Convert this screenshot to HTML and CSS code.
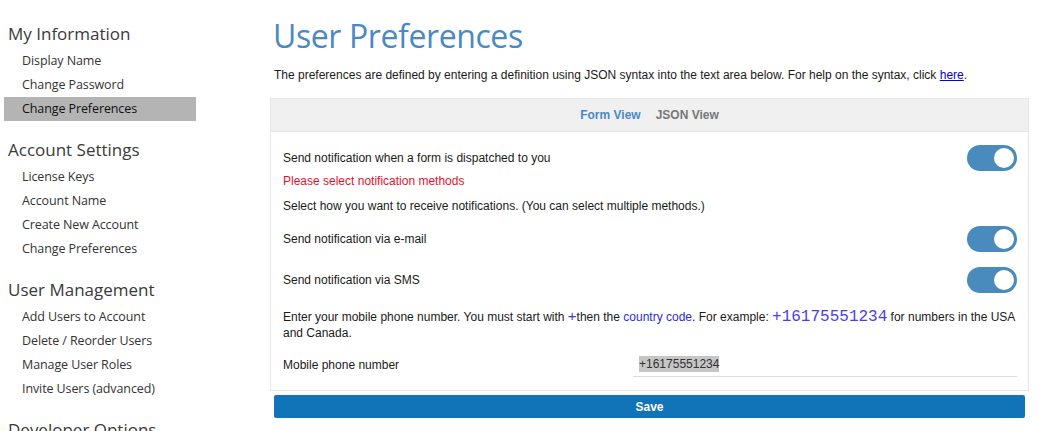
FILE: index.html
```html
<!DOCTYPE html>
<html>
<head>
<meta charset="utf-8">
<link rel="stylesheet" href="styles.css">
</head>
<body>
<div class="page">
  <nav class="sidebar">
    <div class="section">
      <h2 class="sec-title">My Information</h2>
      <a class="item">Display Name</a>
      <a class="item">Change Password</a>
      <a class="item active">Change Preferences</a>
    </div>
    <div class="section">
      <h2 class="sec-title">Account Settings</h2>
      <a class="item">License Keys</a>
      <a class="item">Account Name</a>
      <a class="item">Create New Account</a>
      <a class="item">Change Preferences</a>
    </div>
    <div class="section">
      <h2 class="sec-title">User Management</h2>
      <a class="item">Add Users to Account</a>
      <a class="item">Delete / Reorder Users</a>
      <a class="item">Manage User Roles</a>
      <a class="item">Invite Users (advanced)</a>
    </div>
    <div class="section">
      <h2 class="sec-title">Developer Options</h2>
    </div>
  </nav>
  <main class="main">
    <h1 class="title">User Preferences</h1>
    <p class="intro">The preferences are defined by entering a definition using JSON syntax into the text area below. For help on the syntax, click <a class="link" href="#">here</a>.</p>
    <div class="panel">
      <div class="tabs">
        <span class="tab tab-on">Form View</span>
        <span class="tab tab-off">JSON View</span>
      </div>
      <div class="body">
        <div class="row r1">
          <span>Send notification when a form is dispatched to you</span>
          <span class="toggle"><span class="knob"></span></span>
        </div>
        <div class="line error">Please select notification methods</div>
        <div class="line select">Select how you want to receive notifications. (You can select multiple methods.)</div>
        <div class="row r-email">
          <span>Send notification via e-mail</span>
          <span class="toggle"><span class="knob"></span></span>
        </div>
        <div class="row r-sms">
          <span>Send notification via SMS</span>
          <span class="toggle"><span class="knob"></span></span>
        </div>
        <p class="hint">Enter your mobile phone number. You must start with <span class="plus">+</span>then the <a class="clink">country code</a>. For example: <span class="example">+16175551234</span> for numbers in the USA and Canada.</p>
        <div class="phone-row">
          <span class="phone-label">Mobile phone number</span>
          <span class="phone-input"><span class="sel">+16175551234</span></span>
        </div>
      </div>
    </div>
    <button class="save">Save</button>
  </main>
</div>
</body>
</html>
```
FILE: styles.css
```css
html, body {
  margin: 0;
  padding: 0;
  background: #fff;
}
.page {
  display: flex;
  align-items: flex-start;
}
.sidebar {
  width: 196px;
  padding: 22px 0 0 4px;
  box-sizing: border-box;
  flex: none;
  font-family: "Open Sans", "Noto Sans", sans-serif;
}
.section {
  display: flex;
  flex-direction: column;
  margin-bottom: 17px;
}
.sec-title {
  margin: 0 0 3px 0;
  padding-left: 4px;
  font-size: 17px;
  font-weight: 400;
  line-height: 24px;
  color: #3a3a3a;
  white-space: nowrap;
}
.item {
  display: block;
  height: 24px;
  line-height: 24px;
  padding-left: 18px;
  font-size: 12.5px;
  color: #333;
  letter-spacing: -0.1px;
  white-space: nowrap;
}
.item.active {
  background: #b4b4b4;
  color: #111;
}
.main {
  flex: 1;
  padding: 0 14px 0 74px;
  font-family: "Liberation Sans", Arial, sans-serif;
  font-size: 12px;
  color: #1a1a1a;
}
.title {
  margin: 15px 0 0 3px;
  font-family: "Open Sans", "Noto Sans", sans-serif;
  font-weight: 400;
  font-size: 32px;
  line-height: 42px;
  color: #4a89c3;
  letter-spacing: -0.4px;
}
.intro {
  margin: 10px 0 0 4px;
  line-height: 16px;
}
.link {
  color: #0000ee;
  text-decoration: underline;
}
.panel {
  margin-top: 15px;
  border: 1px solid #e6e6e6;
  background: #fff;
}
.tabs {
  height: 32px;
  background: #f0f0f0;
  border-bottom: 1px solid #e6e6e6;
  display: flex;
  justify-content: center;
  align-items: center;
  gap: 15px;
  font-weight: bold;
}
.tab-on { color: #4a89c3; }
.tab-off { color: #777; }
.body {
  padding: 13px 11px 13px 12px;
}
.row {
  display: flex;
  justify-content: space-between;
  align-items: center;
  height: 26px;
}
.toggle {
  width: 50px;
  height: 26px;
  border-radius: 13px;
  background: #4a8bbd;
  display: flex;
  justify-content: flex-end;
  align-items: center;
  padding-right: 3px;
  box-sizing: border-box;
}
.knob {
  width: 20px;
  height: 20px;
  border-radius: 50%;
  background: #fff;
}
.line {
  line-height: 16px;
}
.error {
  margin-top: 2px;
  color: #e8102e;
}
.select {
  margin-top: 9px;
}
.r-email { margin-top: 12px; }
.r-sms { margin-top: 15px; }
.hint {
  margin: 16px 0 0 0;
  line-height: 16px;
}
.plus {
  color: #3a3ae8;
  font-size: 15px;
  line-height: 12px;
}
.clink {
  color: #2a2ae0;
}
.example {
  font-family: "Liberation Mono", "Courier New", monospace;
  font-size: 16px;
  line-height: 12px;
  color: #4b3cf0;
}
.phone-row {
  margin-top: 12px;
  display: flex;
  align-items: stretch;
  height: 24px;
}
.phone-label {
  width: 350px;
  flex: none;
  display: flex;
  align-items: center;
}
.phone-input {
  flex: 1;
  border-bottom: 1px solid #dcdcdc;
  padding-left: 6px;
  display: flex;
  align-items: center;
  padding-bottom: 1px;
}
.sel {
  background: #c6c6c6;
  color: #333;
  line-height: 16px;
}
.save {
  display: block;
  width: calc(100% - 8px);
  margin: 4px 0 0 4px;
  height: 23px;
  border: none;
  border-radius: 2px;
  background: #1173b8;
  color: #fff;
  font-family: "Liberation Sans", Arial, sans-serif;
  font-weight: bold;
  font-size: 12px;
  padding: 0;
}
```
